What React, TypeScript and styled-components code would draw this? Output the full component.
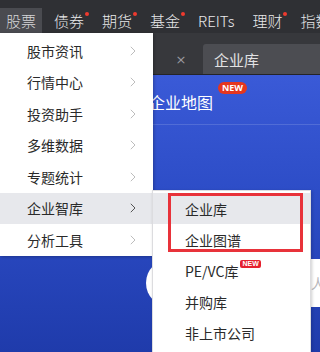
import React from 'react';
import styled, { createGlobalStyle } from 'styled-components';

const GlobalStyle = createGlobalStyle`
    html, body {
        margin: 0;
        padding: 0;
        background: #1f3cad;
    }
    * {
        box-sizing: border-box;
    }
`;

const FONT = `"Noto Sans CJK SC", "Noto Sans", sans-serif`;

const Page = styled.div`
    position: relative;
    width: 320px;
    height: 352px;
    overflow: hidden;
    display: flex;
    flex-direction: column;
    font-family: ${FONT};
`;

const TopNav = styled.div`
    height: 33px;
    flex-shrink: 0;
    display: flex;
    align-items: flex-end;
    gap: 6px;
    background: #2f3034;
    white-space: nowrap;
`;

const NavItem = styled.div<{ $active?: boolean }>`
    position: relative;
    height: 25px;
    padding: 0 6px 1px 6px;
    display: flex;
    align-items: center;
    font-size: 15px;
    font-weight: 300;
    color: ${p => (p.$active ? '#d6d6d8' : '#e8e8ea')};
    background: ${p => (p.$active ? '#4a4b50' : 'transparent')};
`;

const RedDot = styled.span`
    position: absolute;
    top: 4px;
    right: 1px;
    width: 4px;
    height: 4px;
    border-radius: 50%;
    background: #f03a2e;
`;

const TabBar = styled.div`
    height: 42px;
    flex-shrink: 0;
    display: flex;
    align-items: flex-end;
    background: #37383c;
    border-bottom: 1px solid #242427;
`;

const CloseMark = styled.span`
    width: 44px;
    margin-left: 159px;
    align-self: center;
    padding-top: 12px;
    text-align: center;
    font-family: "DejaVu Sans", sans-serif;
    font-size: 13px;
    color: #9a9a9e;
`;

const Tab = styled.div`
    flex: 1;
    height: 30px;
    padding-left: 11px;
    display: flex;
    align-items: center;
    border-radius: 3px 0 0 0;
    background: #4c4d52;
    font-size: 15px;
    color: #e2e2e4;
`;

const Hero = styled.div`
    flex: 1;
    display: flex;
    flex-direction: column;
    padding-left: 146px;
    background: linear-gradient(180deg, #3a5ad7 0%, #2c4cc6 45%, #1f3bab 100%);
    overflow: hidden;
`;

const TitleRow = styled.div`
    margin: 15px 0 0 3px;
    display: flex;
`;

const Title = styled.span`
    position: relative;
    font-size: 16px;
    line-height: 24px;
    color: #ffffff;
`;

const HeroBadge = styled.span`
    position: absolute;
    left: calc(100% + 5px);
    top: -8px;
    height: 12px;
    padding: 0 4px;
    border-radius: 6px;
    background: #e5361f;
    color: #fff;
    font-family: "Noto Sans", sans-serif;
    font-weight: 700;
    font-size: 9px;
    line-height: 12px;
`;

const Divider = styled.div`
    margin-top: 10px;
    height: 1px;
    background: rgba(255, 255, 255, 0.14);
    margin-left: -146px;
`;

const SearchBox = styled.div`
    margin-top: 134px;
    width: 220px;
    height: 48px;
    flex-shrink: 0;
    border-radius: 24px;
    background: #ffffff;
    padding-left: 165px;
    display: flex;
    align-items: center;
    white-space: nowrap;
    font-size: 14px;
    color: #b8b8bc;
`;

const Menu = styled.div`
    position: absolute;
    top: 33px;
    left: 0;
    width: 153px;
    padding-top: 2px;
    background: #ffffff;
    box-shadow: 1px 1px 3px rgba(0, 0, 0, 0.25);
`;

const MenuItem = styled.div<{ $active?: boolean }>`
    height: 31.5px;
    padding: 0 17px 0 27px;
    display: flex;
    align-items: center;
    justify-content: space-between;
    font-size: 14px;
    color: #2a2a2a;
    background: ${p => (p.$active ? '#e7e8ec' : 'transparent')};
`;

const Chevron = styled.svg<{ $active?: boolean }>`
    width: 6px;
    height: 10px;
    stroke: ${p => (p.$active ? '#555' : '#bdbdbd')};
    fill: none;
    stroke-width: 1;
`;

const SubMenu = styled.div`
    position: absolute;
    top: 157px;
    left: 152px;
    width: 159px;
    padding: 2px 0 12px;
    background: #ffffff;
    border: 1px solid #dcdcdf;
    box-shadow: 1px 1px 3px rgba(0, 0, 0, 0.2);
`;

const SubItem = styled.div<{ $active?: boolean }>`
    height: 31px;
    padding-left: 32px;
    display: flex;
    align-items: center;
    font-size: 14px;
    color: #2a2a2a;
    background: ${p => (p.$active ? '#e7e8ec' : 'transparent')};
`;

const SubLabel = styled.span`
    position: relative;
`;

const SmallBadge = styled.span`
    position: absolute;
    left: calc(100% + 2px);
    top: -1px;
    height: 8px;
    padding: 0 2px;
    border-radius: 2px;
    background: #e5202e;
    color: #fff;
    font-family: "Liberation Sans", sans-serif;
    font-weight: 700;
    font-size: 7px;
    line-height: 8px;
`;

const Highlight = styled.div`
    position: absolute;
    top: 2px;
    left: 15px;
    width: 135px;
    height: 59px;
    border: 3px solid #e8323a;
    pointer-events: none;
`;

const navItems = [
    { label: '股票', active: true },
    { label: '债券', dot: true },
    { label: '期货', dot: true },
    { label: '基金', dot: true },
    { label: 'REITs' },
    { label: '理财', dot: true },
    { label: '指数' },
];

const menuItems = ['股市资讯', '行情中心', '投资助手', '多维数据', '专题统计', '企业智库', '分析工具'];

const subItems = [
    { label: '企业库', active: true },
    { label: '企业图谱' },
    { label: 'PE/VC库', isNew: true },
    { label: '并购库' },
    { label: '非上市公司' },
];

const ChevronIcon = ({ active }: { active?: boolean }) => (
    <Chevron $active={active} viewBox="0 0 6 10">
        <polyline points="0.8,0.8 5,5 0.8,9.2" />
    </Chevron>
);

const App = () => (
    <>
        <GlobalStyle />
        <Page>
            <TopNav>
                {navItems.map(item => (
                    <NavItem key={item.label} $active={item.active}>
                        {item.label}
                        {item.dot && <RedDot />}
                    </NavItem>
                ))}
            </TopNav>
            <TabBar>
                <CloseMark>×</CloseMark>
                <Tab>企业库</Tab>
            </TabBar>
            <Hero>
                <TitleRow>
                    <Title>
                        企业地图
                        <HeroBadge>NEW</HeroBadge>
                    </Title>
                </TitleRow>
                <Divider />
                <SearchBox>人名</SearchBox>
            </Hero>

            <Menu>
                {menuItems.map(label => {
                    const active = label === '企业智库';
                    return (
                        <MenuItem key={label} $active={active}>
                            {label}
                            <ChevronIcon active={active} />
                        </MenuItem>
                    );
                })}
                <SubMenu>
                    {subItems.map(item => (
                        <SubItem key={item.label} $active={item.active}>
                            <SubLabel>
                                {item.label}
                                {item.isNew && <SmallBadge>NEW</SmallBadge>}
                            </SubLabel>
                        </SubItem>
                    ))}
                    <Highlight />
                </SubMenu>
            </Menu>
        </Page>
    </>
);

export default App;
